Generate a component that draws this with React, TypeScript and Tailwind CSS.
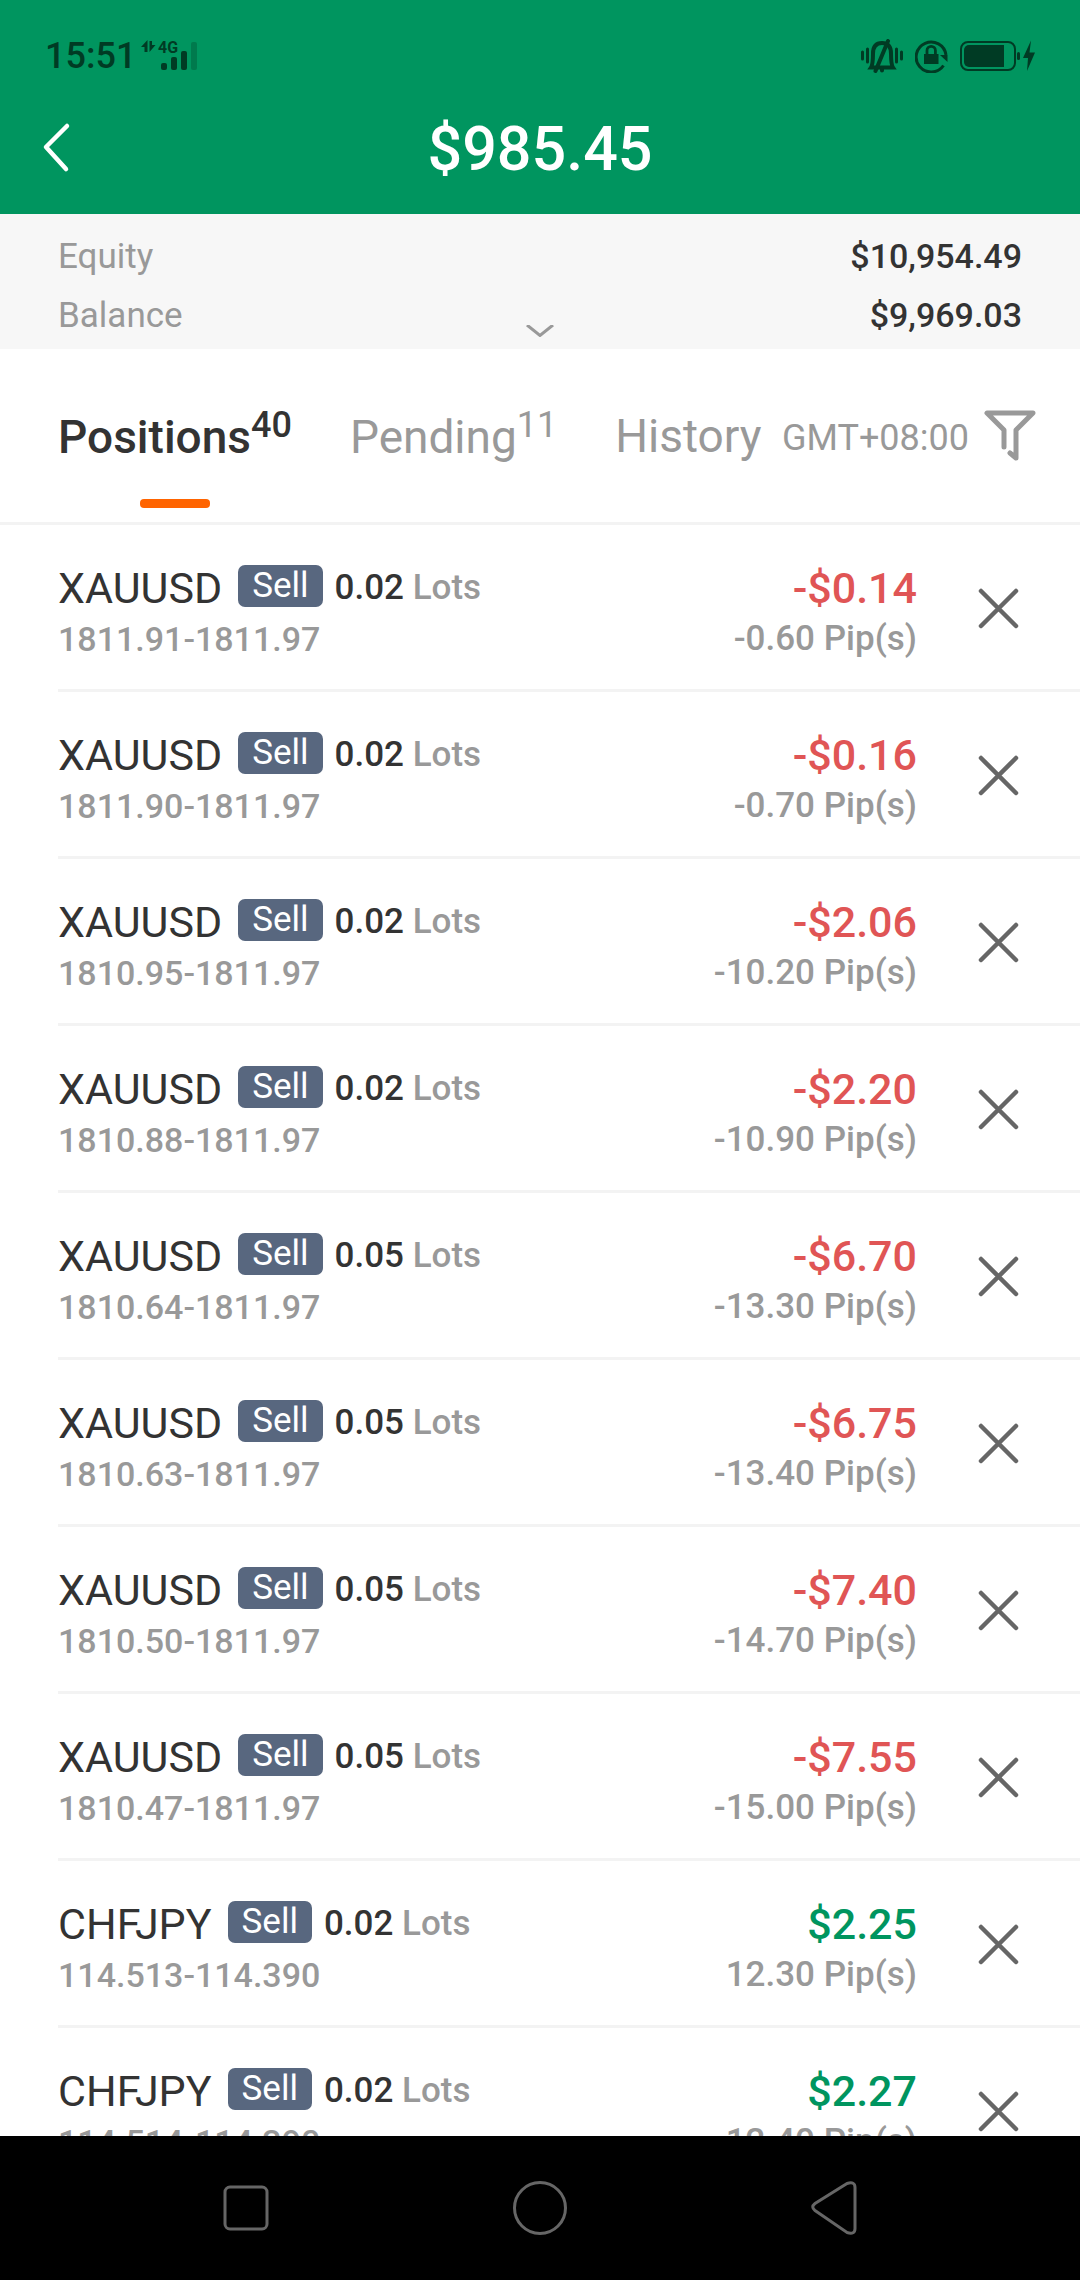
import React, { useState } from 'react';

interface Position {
    symbol: string;
    lots: string;
    prices: string;
    profit: string;
    pips: string;
}

interface Tab {
    label: string;
    count?: number;
}

const initialPositions: Position[] = [
    { symbol: 'XAUUSD', lots: '0.02', prices: '1811.91-1811.97', profit: '-$0.14', pips: '-0.60' },
    { symbol: 'XAUUSD', lots: '0.02', prices: '1811.90-1811.97', profit: '-$0.16', pips: '-0.70' },
    { symbol: 'XAUUSD', lots: '0.02', prices: '1810.95-1811.97', profit: '-$2.06', pips: '-10.20' },
    { symbol: 'XAUUSD', lots: '0.02', prices: '1810.88-1811.97', profit: '-$2.20', pips: '-10.90' },
    { symbol: 'XAUUSD', lots: '0.05', prices: '1810.64-1811.97', profit: '-$6.70', pips: '-13.30' },
    { symbol: 'XAUUSD', lots: '0.05', prices: '1810.63-1811.97', profit: '-$6.75', pips: '-13.40' },
    { symbol: 'XAUUSD', lots: '0.05', prices: '1810.50-1811.97', profit: '-$7.40', pips: '-14.70' },
    { symbol: 'XAUUSD', lots: '0.05', prices: '1810.47-1811.97', profit: '-$7.55', pips: '-15.00' },
    { symbol: 'CHFJPY', lots: '0.02', prices: '114.513-114.390', profit: '$2.25', pips: '12.30' },
    { symbol: 'CHFJPY', lots: '0.02', prices: '114.514-114.390', profit: '$2.27', pips: '12.40' },
];

const tabs: Tab[] = [
    { label: 'Positions', count: 40 },
    { label: 'Pending', count: 11 },
    { label: 'History' },
];

const StatusBar: React.FC = () => (
    <div className="flex h-[84px] items-center justify-between pt-7 pr-[44px] pl-[45px] text-[#003b24]">
        <div className="flex items-center gap-1">
            <span className="text-[36px] leading-[42px] font-medium">15:51</span>
            <svg width="58" height="34" viewBox="0 0 58 34" fill="currentColor" aria-label="4G signal">
                <path d="M7.500 1v12H4.500V8H1zM9.500 13V2h2.500v4h3.500z" />
                <text x="18" y="14" fontSize="16" fontWeight="700">4G</text>
                <rect x="21" y="24" width="6" height="7" rx="2" />
                <rect x="31" y="18" width="6" height="13" rx="2" />
                <rect x="41" y="12" width="6" height="19" rx="2" />
                <rect x="51" y="3" width="6" height="28" rx="2" opacity="0.3" />
            </svg>
        </div>
        <div className="flex items-center gap-3">
            <svg width="42" height="34" viewBox="0 0 42 34" fill="none" stroke="currentColor" strokeLinecap="round" aria-label="Vibrate">
                <path d="M1.500 13v7M6.500 10v13M35.500 10v13M40.500 13v7" strokeWidth="3" />
                <path d="M10 28.500c2-3 2-8 2-14C12 8 15 4 21 4s9 4 9 10.500c0 6 0 11 2 14z" strokeWidth="4" />
                <path d="M27 2L14.500 32M21 31.500v-2" strokeWidth="4" />
            </svg>
            <svg width="33" height="34" viewBox="0 0 33 34" fill="none" stroke="currentColor" aria-label="Rotation locked">
                <path d="M28.500 26.500A15 15 0 1 1 31 16" strokeWidth="3" />
                <path d="M25 16h7.500v7z" fill="currentColor" stroke="none" />
                <rect x="9" y="15" width="14.500" height="10" fill="currentColor" stroke="none" />
                <path d="M12 16v-4.500a4.200 4.200 0 0 1 8.400 0V16" strokeWidth="2.800" />
            </svg>
            <svg width="76" height="34" viewBox="0 0 76 34" fill="currentColor" aria-label="Battery charging">
                <rect x="1" y="3" width="54" height="28" rx="7" fill="none" stroke="currentColor" strokeWidth="2" />
                <path d="M9 6h35v22H9a5 5 0 0 1-5-5V11a5 5 0 0 1 5-5z" />
                <rect x="57" y="13" width="3" height="8" rx="1.500" />
                <path d="M71 1.500L63 19h5l-1 13 8-18.500h-5.500z" />
            </svg>
        </div>
    </div>
);

const TitleBar: React.FC = () => (
    <div className="grid h-[130px] grid-cols-[1fr_auto_1fr] items-center px-10">
        <button type="button" aria-label="Back" className="w-fit">
            <svg width="34" height="54" viewBox="0 0 34 54" fill="none" stroke="white" strokeWidth="4.500" strokeLinecap="round" strokeLinejoin="round">
                <path d="M27 4L6 25l20 22" />
            </svg>
        </button>
        <h1 className="text-[61px] leading-[72px] font-medium text-white">$985.45</h1>
    </div>
);

const AccountSummary: React.FC = () => (
    <section className="relative bg-[#f7f7f7] pt-[13px] pr-[58px] pb-1 pl-[58px] text-[35px] leading-[59px]">
        <dl>
            <div className="flex justify-between">
                <dt className="text-[#999]">Equity</dt>
                <dd className="text-[34px] font-medium text-[#333]">$10,954.49</dd>
            </div>
            <div className="flex justify-between">
                <dt className="text-[#999]">Balance</dt>
                <dd className="text-[34px] font-medium text-[#333]">$9,969.03</dd>
            </div>
        </dl>
        <button type="button" aria-label="Show more" className="absolute bottom-3 left-1/2 -translate-x-1/2">
            <svg className="block" width="28" height="12" viewBox="0 0 28 12" fill="none" stroke="#999" strokeWidth="3">
                <path d="M1 0l13 10.500L27 0" />
            </svg>
        </button>
    </section>
);

const TabBar: React.FC<{ active: string; onSelect: (label: string) => void }> = ({ active, onSelect }) => (
    <nav className="flex h-[176px] shrink-0 items-stretch border-b-[3px] border-[#f3f3f3] pr-[43px] pl-[58px]">
        <div className="flex gap-[58px]">
            {tabs.map((tab) => (
                <button
                    key={tab.label}
                    type="button"
                    onClick={() => onSelect(tab.label)}
                    className={`relative text-[46px] leading-[54px] ${active === tab.label ? 'font-medium text-[#333]' : 'text-[#999]'}`}
                >
                    {tab.label}
                    {tab.count && <sup className="static align-super text-[36px] leading-none">{tab.count}</sup>}
                    {active === tab.label && (
                        <span className="absolute bottom-[14px] left-1/2 h-[9px] w-[70px] -translate-x-1/2 rounded-[4px] bg-[#ff6400]" />
                    )}
                </button>
            ))}
        </div>
        <div className="ml-auto flex items-center gap-[14px] text-[#999]">
            <span className="pt-1 text-[36px] leading-[40px]">GMT+08:00</span>
            <button type="button" aria-label="Filter">
                <svg className="block" width="54" height="54" viewBox="0 0 54 54" fill="none" stroke="currentColor" strokeWidth="5" strokeLinecap="round" strokeLinejoin="round">
                    <path d="M21 38V21L4 4h46L33 21v28l-6-5" />
                </svg>
            </button>
        </div>
    </nav>
);

const PositionRow: React.FC<{ position: Position; onClose: () => void }> = ({ position, onClose }) => {
    const isLoss = position.profit.startsWith('-');

    return (
        <li className="flex items-center border-b-[3px] border-[#f3f3f3] pt-[38px] pr-[55px] pb-[30px]">
            <div className="flex flex-col gap-[6px]">
                <div className="flex items-center">
                    <span className="text-[43px] leading-[50px] text-[#333]">{position.symbol}</span>
                    <span className="mb-1 ml-4 rounded-[7px] bg-[#58677f] px-[14px] text-[35px] leading-[42px] text-white">Sell</span>
                    <span className="ml-3 text-[35px] leading-[42px] font-medium text-[#999]">
                        <span className="text-[#333]">{position.lots}</span> Lots
                    </span>
                </div>
                <span className="text-[34px] leading-[40px] font-medium text-[#999]">{position.prices}</span>
            </div>
            <div className="ml-auto flex flex-col gap-[6px] text-right font-medium">
                <span className={`text-[43px] leading-[50px] ${isLoss ? 'text-[#e05555]' : 'text-[#00955f]'}`}>{position.profit}</span>
                <span className="text-[35px] leading-[40px] text-[#999]">{position.pips} Pip(s)</span>
            </div>
            <button type="button" aria-label={`Close ${position.symbol}`} onClick={onClose} className="ml-[54px]">
                <svg className="block" width="54" height="54" viewBox="0 0 54 54" fill="none" stroke="#666" strokeWidth="4.500" strokeLinecap="round">
                    <path d="M10 7l35 35M45 7L10 42" />
                </svg>
            </button>
        </li>
    );
};

const SystemNav: React.FC = () => (
    <div className="grid h-36 shrink-0 grid-cols-[1fr_auto_1fr] items-center bg-black text-[#666]">
        <button type="button" aria-label="Recent apps" className="justify-self-center">
            <svg className="mr-[22px] block" width="46" height="46" viewBox="0 0 46 46" fill="none" stroke="currentColor" strokeWidth="3">
                <rect x="2" y="2" width="42" height="42" rx="5" />
            </svg>
        </button>
        <button type="button" aria-label="Home">
            <svg className="block" width="54" height="54" viewBox="0 0 54 54" fill="none" stroke="currentColor" strokeWidth="3">
                <circle cx="27" cy="27" r="25.500" />
            </svg>
        </button>
        <button type="button" aria-label="Back" className="justify-self-center">
            <svg className="ml-[20px] block" width="46" height="54" viewBox="0 0 46 54" fill="none" stroke="currentColor" strokeWidth="3">
                <path d="M36 2.500L4 22.500q-4.500 3.500 0 7L36 51.500q8 2.500 8-4V6.500q0-6.500-8-4z" />
            </svg>
        </button>
    </div>
);

const App: React.FC = () => {
    const [positions, setPositions] = useState<Position[]>(initialPositions);
    const [activeTab, setActiveTab] = useState('Positions');

    const closePosition = (index: number) => {
        setPositions(positions.filter((_, i) => i !== index));
    };

    return (
        <div className="flex h-screen flex-col bg-white font-['Roboto',sans-serif]">
            <header className="shrink-0 bg-[#00955f]">
                <StatusBar />
                <TitleBar />
            </header>
            <AccountSummary />
            <TabBar active={activeTab} onSelect={setActiveTab} />
            <main className="min-h-0 flex-1 overflow-hidden">
                <ul className="pl-[58px]">
                    {positions.map((position, index) => (
                        <PositionRow key={position.prices} position={position} onClose={() => closePosition(index)} />
                    ))}
                </ul>
            </main>
            <SystemNav />
        </div>
    );
};

export default App;
